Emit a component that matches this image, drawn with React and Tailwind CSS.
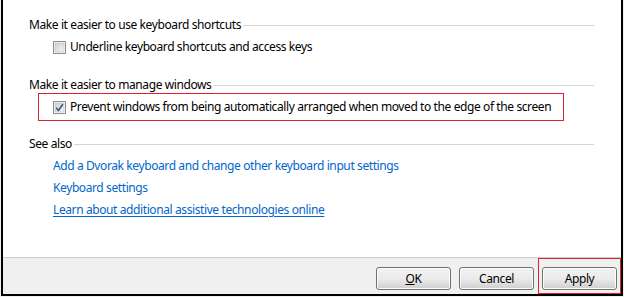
import React from "react";

const font = { fontFamily: '"Noto Sans", "Open Sans", sans-serif', letterSpacing: "-0.4px" };

function CheckBox({ checked }) {
  return (
    <svg width="13" height="13" viewBox="0 0 13 13" className="shrink-0">
      <defs>
        <linearGradient id={checked ? "cbg1" : "cbg0"} x1="0" y1="0" x2="1" y2="1">
          <stop offset="0" stopColor="#cbcfd5" />
          <stop offset="1" stopColor="#f6f6f6" />
        </linearGradient>
      </defs>
      <rect x="0.5" y="0.5" width="12" height="12" fill="#ffffff" stroke="#8e8f8f" />
      <rect x="2" y="2" width="9" height="9" fill={`url(#${checked ? "cbg1" : "cbg0"})`} stroke="#b5b8bd" strokeWidth="0.6" />
      {checked && (
        <path d="M3.2 6.6 L5.4 9.6 L9.8 3.2" fill="none" stroke="#3d4f82" strokeWidth="1.6" strokeLinejoin="round" />
      )}
    </svg>
  );
}

function Heading({ children, className }) {
  return (
    <div className={`flex items-center h-[16px] ${className}`}>
      <span className="whitespace-nowrap">{children}</span>
      <div className="flex-1 h-px bg-[#d5d5d5] ml-[2px]" />
    </div>
  );
}

function Btn({ children }) {
  return (
    <button
      type="button"
      className="w-[75px] h-[23px] rounded-[3px] border border-[#707070] text-[12px] text-black bg-gradient-to-b from-[#f2f2f2] via-[#ebebeb] to-[#cfcfcf] shadow-[inset_0_0_0_1px_#fcfcfc]"
      style={font}
    >
      {children}
    </button>
  );
}

export default function App() {
  return (
    <div className="w-[624px] h-[297px] bg-[#f0f0f0] overflow-hidden text-[12px] text-black" style={font}>
      <div className="ml-[1px] w-[622px] h-[296px] border-l-2 border-r-2 border-b-2 border-black flex flex-col">
        <div className="flex-1 bg-white pl-[26px] pr-[27px] pt-[17px] flex flex-col border-b border-[#cccccc]">
          <Heading>Make it easier to use keyboard shortcuts</Heading>
          <div className="mt-[3px] h-[22px] pl-[24px] flex items-center gap-[4px]">
            <CheckBox />
            <span className="whitespace-nowrap">Underline keyboard shortcuts and access keys</span>
          </div>

          <Heading className="mt-[19px]">Make it easier to manage windows</Heading>
          <div className="ml-[9px] w-[526px] h-[28px] border border-[#e0202a] pl-[14px] flex items-center gap-[4px]">
            <CheckBox checked />
            <span className="whitespace-nowrap">Prevent windows from being automatically arranged when moved to the edge of the screen</span>
          </div>

          <Heading className="mt-[15px]">See also</Heading>
          <div className="mt-[3px] pl-[24px] flex flex-col text-[#0066cc]">
            <div className="h-[22px] flex items-center whitespace-nowrap">Add a Dvorak keyboard and change other keyboard input settings</div>
            <div className="h-[22px] flex items-center whitespace-nowrap">Keyboard settings</div>
            <div className="h-[22px] flex items-center whitespace-nowrap">
              <span className="underline underline-offset-2">Learn about additional assistive technologies online</span>
            </div>
          </div>
        </div>

        <div className="h-[36px] bg-[#f0f0f0] flex items-start justify-end">
          <div className="flex items-center gap-[8px] mt-[9px]">
            <Btn>
              <span className="underline">O</span>K
            </Btn>
            <Btn>Cancel</Btn>
          </div>
          <div className="ml-[4px] border border-[#e0202a] w-[83px] h-[36px] pl-[3px] pt-[8px]">
            <Btn>Apply</Btn>
          </div>
        </div>
      </div>
    </div>
  );
}
